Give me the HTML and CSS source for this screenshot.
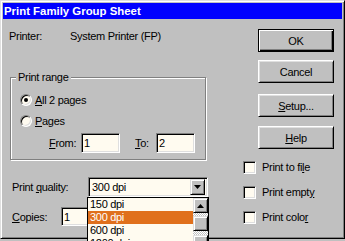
FILE: index.html
```html
<!DOCTYPE html>
<html>
<head>
<meta charset="utf-8">
<link rel="stylesheet" href="styles.css">
</head>
<body>
<div class="win">
  <div class="title">Print Family Group Sheet</div>
  <div class="content">
    <div class="left">
      <div class="printer"><span class="plabel">Printer:</span><span>System Printer (FP)</span></div>
      <div class="group">
        <span class="gtitle">Print range</span>
        <div class="radio-row first"><span class="radio on"></span><span><u>A</u>ll 2 pages</span></div>
        <div class="radio-row"><span class="radio"></span><span><u>P</u>ages</span></div>
        <div class="range-row">
          <span class="from-l"><u>F</u>rom:</span><span class="field range-field">1</span>
          <span class="to-l"><u>T</u>o:</span><span class="field range-field">2</span>
        </div>
      </div>
      <div class="quality">
        <span class="qlabel">Print <u>q</u>uality:</span>
        <div class="combo">
          <span class="combo-text">300 dpi</span>
          <span class="drop-btn"><svg width="7" height="4" viewBox="0 0 7 4"><path d="M0 0h7L3.5 4z" fill="#000"/></svg></span>
        </div>
      </div>
      <div class="copies">
        <span class="clabel"><u>C</u>opies:</span><span class="field copies-field">1</span>
      </div>
    </div>
    <div class="right">
      <div class="btn default">OK</div>
      <div class="btn">Cancel</div>
      <div class="btn"><span><u>S</u>etup...</span></div>
      <div class="btn"><span><u>H</u>elp</span></div>
      <div class="checks">
        <div class="check-row"><span class="check"></span><span>Print to fi<u>l</u>e</span></div>
        <div class="check-row"><span class="check"></span><span>Print empt<u>y</u></span></div>
        <div class="check-row"><span class="check"></span><span>Print colo<u>r</u></span></div>
      </div>
    </div>
  </div>
  <div class="droplist">
    <div class="items">
      <div class="item">150 dpi</div>
      <div class="item sel">300 dpi</div>
      <div class="item">600 dpi</div>
      <div class="item">1200 dpi</div>
    </div>
    <div class="vscroll">
      <span class="sbtn"><svg width="7" height="4" viewBox="0 0 7 4"><path d="M0 4h7L3.5 0z" fill="#000"/></svg></span>
      <span class="track"></span>
      <span class="thumb"></span>
      <span class="track short"></span>
      <span class="sbtn"><svg width="7" height="4" viewBox="0 0 7 4"><path d="M0 0h7L3.5 4z" fill="#000"/></svg></span>
    </div>
  </div>
</div>
</body>
</html>
```
FILE: styles.css
```css
* { box-sizing: border-box; }
html, body { margin: 0; padding: 0; }
body {
  width: 345px;
  height: 241px;
  overflow: hidden;
  background: #c0c0c0;
  font-family: "Liberation Sans", Arial, sans-serif;
  font-size: 11px;
  letter-spacing: -0.3px;
  color: #000;
}
u { text-decoration: underline; text-underline-offset: 1px; }

.win {
  position: relative;
  width: 345px;
  height: 239px;
  background: #c0c0c0;
  border: 1px solid;
  border-color: #dfdfdf #000 #000 #dfdfdf;
  box-shadow: inset 1px 1px #fff, inset -1px -1px #808080;
  padding: 2px;
}
.title {
  height: 16px;
  background: #0000ff;
  color: #fff;
  font-weight: bold;
  font-size: 11.4px;
  letter-spacing: 0;
  line-height: 17px;
  padding-left: 1px;
  white-space: nowrap;
}
.content { display: flex; }
.left { width: 240px; }
.printer {
  margin-top: 11px;
  padding-left: 6px;
  height: 13px;
  line-height: 13px;
  display: flex;
}
.plabel { width: 61px; }

.group {
  margin: 34px 0 0 7px;
  width: 196px;
  height: 83px;
  border: 1px solid #808080;
  box-shadow: inset 1px 1px #fff, 1px 1px #fff;
}
.gtitle {
  display: block;
  width: fit-content;
  margin: -7px 0 0 5px;
  padding: 0 2px;
  line-height: 13px;
  background: #c0c0c0;
}
.radio-row {
  display: flex;
  align-items: center;
  height: 12px;
  line-height: 12px;
  padding-left: 9px;
  margin-top: 9px;
}
.radio-row.first { margin-top: 10px; }
.radio {
  position: relative;
  width: 12px;
  height: 12px;
  margin-right: 3px;
  border-radius: 50%;
  border: 1px solid;
  border-color: #808080 #fff #fff #808080;
  box-shadow: inset 1px 1px #000, inset -1px -1px #dfdfdf;
  background: #fffbf0;
}
.radio.on::after {
  content: "";
  position: absolute;
  left: 3px;
  top: 3px;
  width: 4px;
  height: 4px;
  border-radius: 50%;
  background: #000;
}
.range-row {
  display: flex;
  align-items: center;
  height: 20px;
  margin-top: 6px;
  padding-left: 38px;
}
.from-l { width: 32px; }
.to-l { width: 21px; margin-left: 15px; }

.field {
  display: block;
  height: 20px;
  line-height: 16px;
  padding-left: 2px;
  background: #fffbf0;
  border: 1px solid;
  border-color: #808080 #fff #fff #808080;
  box-shadow: inset 1px 1px #000, inset -1px -1px #dfdfdf;
  padding-top: 1px;
}
.range-field { width: 39px; }

.quality {
  display: flex;
  align-items: center;
  margin-top: 17px;
  padding-left: 9px;
  height: 20px;
}
.qlabel { width: 76px; }
.combo {
  width: 120px;
  height: 20px;
  display: flex;
  align-items: center;
  justify-content: space-between;
  background: #fffbf0;
  border: 1px solid;
  border-color: #808080 #fff #fff #808080;
  box-shadow: inset 1px 1px #000, inset -1px -1px #dfdfdf;
  padding: 0 2px 0 3px;
}
.drop-btn, .sbtn {
  width: 15px;
  height: 16px;
  display: flex;
  align-items: center;
  justify-content: center;
  background: #c0c0c0;
  border: 1px solid;
  border-color: #dfdfdf #000 #000 #dfdfdf;
  box-shadow: inset 1px 1px #fff, inset -1px -1px #808080;
}

.copies {
  display: flex;
  align-items: center;
  margin-top: 10px;
  padding-left: 9px;
  height: 19px;
}
.clabel { width: 49px; }
.copies-field { width: 40px; height: 19px; }

.right {
  padding-top: 10px;
  display: flex;
  flex-direction: column;
}
.btn {
  width: 76px;
  height: 23px;
  margin-left: 15px;
  display: flex;
  align-items: center;
  justify-content: center;
  background: #c0c0c0;
  border: 1px solid;
  border-color: #fff #000 #000 #fff;
  box-shadow: inset 1px 1px #dfdfdf, inset -1px -1px #808080;
  margin-top: 9px;
}
.btn.default {
  margin-top: 0;
  border-color: #000;
  box-shadow: inset 1px 1px #fff, inset -1px -1px #000, inset -2px -2px #808080;
}
.btn:nth-child(2) { margin-top: 8px; }
.btn:nth-child(3) { margin-top: 11px; }
.checks {
  margin-top: 12px;
  display: flex;
  flex-direction: column;
  gap: 12px;
}
.check-row {
  display: flex;
  align-items: center;
  height: 13px;
  line-height: 13px;
}
.check {
  width: 13px;
  height: 13px;
  margin-right: 6px;
  background: #fffbf0;
  border: 1px solid;
  border-color: #808080 #fff #fff #808080;
  box-shadow: inset 1px 1px #000, inset -1px -1px #dfdfdf;
}

.droplist {
  position: absolute;
  left: 86px;
  top: 196px;
  width: 122px;
  height: 70px;
  border: 1px solid #000;
  background: #fffbf0;
  display: flex;
}
.items { flex: 1; }
.item {
  height: 13px;
  line-height: 13px;
  padding-left: 2px;
}
.item.sel { background: #e0701c; color: #fff; }
.vscroll {
  width: 15px;
  display: flex;
  flex-direction: column;
}
.vscroll .sbtn { width: 15px; height: 15px; }
.track {
  height: 3px;
  background: repeating-conic-gradient(#fff 0 25%, #c0c0c0 0 50%) 0 0 / 2px 2px;
}
.track.short { height: 4px; }
.thumb {
  height: 15px;
  background: #c0c0c0;
  border: 1px solid;
  border-color: #dfdfdf #000 #000 #dfdfdf;
  box-shadow: inset 1px 1px #fff, inset -1px -1px #808080;
}
```
